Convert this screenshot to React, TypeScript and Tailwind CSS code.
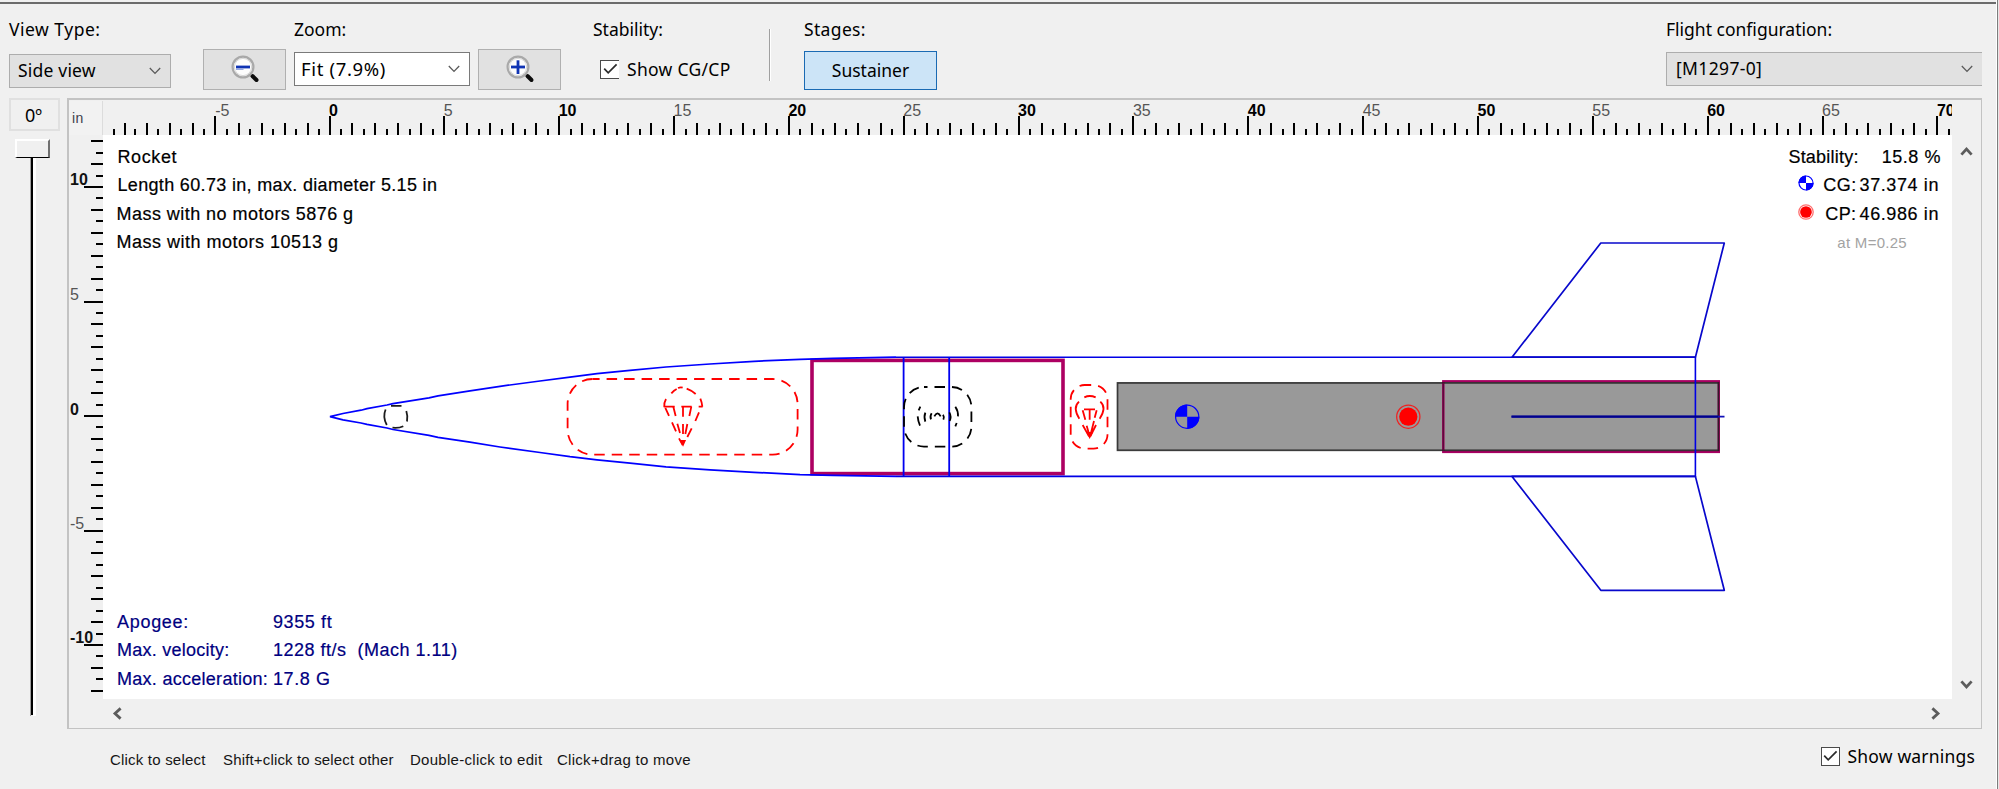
import React, { ReactNode } from "react";

/* Pixels per inch and origin of the drawing, in page pixels. */
const SCALE_X = 22.97;
const SCALE_Y = 22.9;
const ORIGIN_X = 329.5;
const ORIGIN_Y = 416;

const RULER_LEFT = 103;
const RULER_TOP = 101;
const VIEW_TOP = 135;

function Chevron({ className = "" }: { className?: string }) {
  return (
    <svg className={className} width="12" height="8" viewBox="0 0 12 8" fill="none" stroke="#5a5a5a" strokeWidth="1.3">
      <path d="M0.8 1 L6 6.4 L11.2 1" />
    </svg>
  );
}

function ScrollArrow({ d, w, h, className = "" }: { d: string; w: number; h: number; className?: string }) {
  return (
    <svg className={className} width={w} height={h} viewBox={`0 0 ${w} ${h}`} fill="none" stroke="#5c5c5c" strokeWidth="2.8">
      <path d={d} />
    </svg>
  );
}

function Magnifier({ plus = false }: { plus?: boolean }) {
  return (
    <svg width="30" height="30" viewBox="0 0 30 30" fill="none" className="ml-[27px] mt-[4px]">
      <path d="M19.5 20.5 L22 23" stroke="#8a8a8a" strokeWidth="2.5" />
      <path d="M21.5 22 L25.5 26" stroke="#0c0c0c" strokeWidth="4" strokeLinecap="round" />
      <circle cx="12" cy="13" r="10.4" fill="#f4f4f4" stroke="#a9a9a9" strokeWidth="2.2" />
      <circle cx="12" cy="13" r="8.6" fill="#fdfdfd" stroke="#d8d8d8" strokeWidth="1" />
      <path d="M5 13 H19" stroke="#1034b4" strokeWidth="2.8" />
      {plus ? <path d="M12 6.3 V20" stroke="#1034b4" strokeWidth="2.8" /> : <path d="M5 15.3 H12.5" stroke="#7d95dd" strokeWidth="1" />}
    </svg>
  );
}

function Checkbox({ openRight = false }: { openRight?: boolean }) {
  return (
    <span className={`flex h-[19px] w-[19px] items-center justify-center border border-[#4a4a4a] bg-white ${openRight ? "border-r-0" : ""}`}>
      <svg width="15" height="12" viewBox="0 0 15 12" fill="none" stroke="#2b2b2b" strokeWidth="1.7">
        <path d="M1.2 5.6 L5.2 9.8 L13.6 1.4" />
      </svg>
    </span>
  );
}

function Column({ label, labelClass = "", className = "", children }: { label: string; labelClass?: string; className?: string; children: ReactNode }) {
  return (
    <div className={`flex shrink-0 flex-col ${className}`}>
      <span className={`h-6 whitespace-pre leading-6 ${labelClass}`}>{label}</span>
      {children}
    </div>
  );
}

function tickValues(from: number, to: number) {
  const list: number[] = [];
  for (let v = from; v <= to + 0.01; v += 0.5) list.push(v);
  return list;
}

function HorizontalRuler() {
  return (
    <svg className="block" width="1849" height="34" viewBox={`${RULER_LEFT} ${RULER_TOP} 1849 34`} fontFamily="'Liberation Sans', sans-serif" fontSize="16">
      {tickValues(-9.5, 70.5).map((v) => {
        const major = v % 5 === 0;
        const unit = v % 1 === 0;
        const x = Math.round(ORIGIN_X + v * SCALE_X + (v < 0 && !major ? 1.2 : 0) + (v < -8.6 ? 1.5 : 0)) - 1;
        const top = major ? 116 : unit ? 123 : 129;
        return <rect key={v} x={x} y={top} width="2" height={VIEW_TOP - top} fill="#000" />;
      })}
      {tickValues(-5, 70)
        .filter((v) => v % 5 === 0)
        .map((v) => (
          <text key={v} x={ORIGIN_X + v * SCALE_X - 0.5 + (v < 0 ? 1 : 0)} y="116" fontWeight={v % 10 === 0 ? 700 : 400} fill={v % 10 === 0 ? "#000" : "#555"}>
            {v}
          </text>
        ))}
    </svg>
  );
}

function VerticalRuler() {
  return (
    <svg className="block" width="34" height="564" viewBox="69 135 34 564" fontFamily="'Liberation Sans', sans-serif" fontSize="16">
      {tickValues(-12, 12).map((v) => {
        const major = v % 5 === 0;
        const unit = v % 1 === 0;
        const left = major ? 84 : unit ? 91 : 96;
        return <rect key={v} x={left} y={Math.round(ORIGIN_Y - v * SCALE_Y) - 1} width={103 - left} height="2" fill="#000" />;
      })}
      {[10, 5, 0, -5, -10].map((v) => (
        <text key={v} x="70" y={ORIGIN_Y - v * SCALE_Y - (v === 0 ? 1.5 : 2)} fontWeight={v % 10 === 0 ? 700 : 400} fill={v % 10 === 0 ? "#111" : "#555"}>
          {v}
        </text>
      ))}
    </svg>
  );
}

function CgSymbol({ cx, cy, r, clear }: { cx: number; cy: number; r: number; clear: string }) {
  return (
    <g>
      <circle cx={cx} cy={cy} r={r - 0.6} fill={clear} stroke="#0000ff" strokeWidth="1.2" />
      <path d={`M${cx} ${cy} H${cx - r} A${r} ${r} 0 0 1 ${cx} ${cy - r} Z M${cx} ${cy} H${cx + r} A${r} ${r} 0 0 1 ${cx} ${cy + r} Z`} fill="#0000ff" />
    </g>
  );
}

function CpSymbol({ cx, cy, r, ring }: { cx: number; cy: number; r: number; ring: string }) {
  return (
    <g>
      <circle cx={cx} cy={cy} r={r - 0.6} fill="none" stroke={ring} strokeWidth="1.3" />
      <circle cx={cx} cy={cy} r={r * 0.75} fill="#ff0000" />
    </g>
  );
}

function RocketDrawing() {
  return (
    <svg className="block" width="1849" height="564" viewBox={`${RULER_LEFT} ${VIEW_TOP} 1849 564`} fill="none">
      {/* motor mount tube and motor */}
      <rect x="1117.5" y="382.7" width="601" height="67.6" fill="#999999" />
      <rect x="1443.3" y="381.3" width="275.5" height="70.6" stroke="#a80062" strokeWidth="2.4" />
      <rect x="1117.5" y="382.9" width="601" height="67.4" stroke="#1e1e1e" strokeOpacity="0.85" strokeWidth="1.7" />
      <path d="M1443.3 382.5 V450.5" stroke="#5e0a3c" strokeWidth="1.6" />

      {/* inner tube */}
      <rect x="812" y="360.4" width="251" height="113.2" stroke="#ad0062" strokeWidth="3.6" />

      {/* outer body and nose cone */}
      <path
        d="M896 357.2 L833 358.4 L800 359.4 L754 361.3 L710 364 L666 367 L630 370.3 L597 373.6 L570 377.2 L540 381 L500 386.3 L470 390.8 L438 395.8 L429 397.8 L393 403.7 L387 405 L367 408.7 L361 410.2 L343 413.5 L330 416.7 L343 419.9 L361 423 L367 424.4 L387 428 L393 429.5 L429 435.3 L438 437.4 L470 442.2 L500 447 L540 452.5 L570 456.7 L597 459.8 L630 463.2 L666 466.8 L710 469.8 L754 472.3 L800 474.6 L833 475.4 L896 476.4"
        stroke="#0000ff"
        strokeWidth="1.7"
      />
      <path d="M896 357.2 H1695.4 V476.4 H896" stroke="#0000e6" strokeWidth="1.6" />
      <path d="M903.6 357 V476.4 M949.2 357 V476.4" stroke="#0000f0" strokeWidth="1.8" />

      {/* fins */}
      <g stroke="#0808cc" strokeWidth="1.7" strokeLinejoin="round">
        <path d="M1512 357.2 L1600.8 243 H1724.3 L1695.4 357.2 Z" />
        <path d="M1512 476.4 L1600.8 590.3 H1724.3 L1695.4 476.4 Z" />
      </g>
      <path d="M1511.5 416.6 H1724.5" stroke="#1010b8" strokeWidth="1.8" />
      <path d="M1511.5 416.6 H1718" stroke="#00008c" strokeWidth="2.4" />

      {/* nose mass */}
      <path d="M385.6 409.5 Q382.4 417 386.8 425 M391 405.9 H401.5 M406.3 411 Q408 416 407 421.5 M392.5 427.7 Q399 428.3 403.3 426.2" stroke="#1c1c1c" strokeWidth="1.8" />

      {/* main parachute */}
      <rect x="567.6" y="379" width="230" height="75.6" rx="25" stroke="#ff0000" strokeWidth="1.8" strokeDasharray="10.5 7" strokeDashoffset="3.5" />
      <g transform="translate(650 380) scale(0.33333)" stroke="#ff0000" strokeWidth="5.4">
        <path d="M43 80 Q41 70 48 57 M64 40 Q72 31 80 27 M84 24 Q92 21 98 23 M110 26 Q126 32 137 42 M151 56 Q156 68 157 80" />
        <path d="M41 80 H74 M94 80 H125 M146 80 H158" />
        <path d="M46 84 L57 108 M66 127 L78 154 M87 175 L98 195 M70 80 L77 108 M82 131 L90 159 M99 80 V110 M99 132 V162 M124 80 L118 108 M112 132 L106 162 M147 97 L136 123 M125 145 L112 171" />
        <path d="M93 183 H104 L99 194 Z" fill="#ff0000" />
      </g>

      {/* altimeter */}
      <rect x="904" y="387" width="67.4" height="59.6" rx="20" stroke="#000" strokeWidth="1.8" strokeDasharray="10.5 7" strokeDashoffset="7" />
      <g transform="translate(895 375) scale(0.33333)" stroke="#000" strokeWidth="5.4">
        <path d="M76 95 L71 106 M68 124 Q69 138 75 152 M91 113 Q86 126 91 140 M110 115 Q104 124 108 133 M118 124 Q127 106 137 124 M144 119 Q149 126 145 134 M163 112 Q170 124 164 138 M181 95 Q190 108 189 124 M185 144 L181 154" />
      </g>

      {/* drogue parachute */}
      <rect x="1070.7" y="385" width="36.8" height="63.6" rx="14" stroke="#ff0000" strokeWidth="1.8" strokeDasharray="10.5 7" strokeDashoffset="4" />
      <g transform="translate(895 375) scale(0.33333)" stroke="#ff0000" strokeWidth="5.4">
        <path d="M568 67 Q584 59 602 67 M552 80 Q532 98 553 131 M616 80 Q636 98 614 131 M567 103 H600 M563 106 L571 134 M584 104 V134 M605 106 L599 128 M563 150 L582 184 M575 152 L583 180 M597 138 L587 178 M603 150 L586 184" />
        <path d="M578 174 H590 L584 186 Z" fill="#ff0000" />
      </g>

      <CgSymbol cx={1187.2} cy={416.7} r={12.2} clear="#999999" />
      <CpSymbol cx={1408.3} cy={416.7} r={12.2} ring="#ee2222" />
    </svg>
  );
}

function Viewport() {
  return (
    <div className="relative h-[564px] w-[1849px] bg-white text-[18px] text-black [-webkit-text-stroke:0.2px]">
      <RocketDrawing />
      <div className="absolute left-[14.5px] top-[7.5px] flex flex-col whitespace-pre leading-[28.5px] tracking-[0.46px]">
        <span className="tracking-[0.6px]">Rocket</span>
        <span className="tracking-[0.33px]">Length 60.73 in, max. diameter 5.15 in</span>
        <span className="-ml-px">Mass with no motors 5876 g</span>
        <span className="-ml-px tracking-[0.5px]">Mass with motors 10513 g</span>
      </div>
      <div className="absolute bottom-[6px] left-[14px] grid grid-cols-[156px_auto] whitespace-pre leading-[28.3px] text-[#000080]">
        <span className="tracking-[0.7px]">Apogee:</span>
        <span className="tracking-[0.6px]">9355 ft</span>
        <span className="tracking-[0.25px]">Max. velocity:</span>
        <span className="tracking-[0.5px]">1228 ft/s&nbsp; (Mach 1.11)</span>
        <span className="tracking-[0.28px]">Max. acceleration:</span>
        <span className="tracking-[0.6px]">17.8 G</span>
      </div>
      <div className="absolute right-[11px] top-[7.5px] flex flex-col items-end whitespace-pre leading-[28.5px]">
        <div className="flex gap-[23px]">
          <span className="tracking-[0.22px]">Stability:</span>
          <span className="tracking-[0.55px]">15.8 %</span>
        </div>
        <div className="flex items-center pr-[2px]">
          <svg className="mr-[9px] -mt-1" width="16" height="16" viewBox="0 0 16 16">
            <CgSymbol cx={8} cy={8} r={7.6} clear="#ffffff" />
          </svg>
          <span className="mr-[3px] tracking-[0.4px]">CG:</span>
          <span className="tracking-[0.6px]">37.374 in</span>
        </div>
        <div className="flex items-center pr-[2px]">
          <svg className="mr-[11px] -mt-1" width="16" height="16" viewBox="0 0 16 16">
            <CpSymbol cx={8} cy={8} r={7.8} ring="#ff7070" />
          </svg>
          <span className="mr-[3px] tracking-[0.4px]">CP:</span>
          <span className="tracking-[0.6px]">46.986 in</span>
        </div>
        <span className="mr-[34px] mt-px text-[15px] tracking-[0.28px] text-[#a3a3a3] [-webkit-text-stroke:0]">at M=0.25</span>
      </div>
    </div>
  );
}

export default function App() {
  return (
    <div className="flex h-[789px] w-[1999px] overflow-hidden bg-[#f0f0f0] font-['Liberation_Sans',sans-serif] text-black">
      <div className="flex w-[1996px] flex-col">
        <div className="mt-[2px] h-[2px] shrink-0 bg-[#6b6b6b]" />

        {/* toolbar */}
        <div className="flex h-[94px] shrink-0 items-start pl-[9px] pr-[14px] pt-[13px] font-['Noto_Sans',sans-serif] text-[17.5px]">
          <Column label="View Type:" labelClass="tracking-[0.5px]" className="w-[162px]">
            <div className="mt-[13px] flex h-[34px] items-center justify-between border border-[#adadad] bg-[#e1e1e1] pl-2 pr-[9px]">
              <span className="leading-none tracking-[0.2px]">Side view</span>
              <Chevron />
            </div>
          </Column>
          <div className="ml-[32px] mt-[32px] h-[41px] w-[83px] border border-[#b0b0b0] bg-[#e1e1e1]">
            <Magnifier />
          </div>
          <Column label="Zoom:" className="ml-[8px] w-[176px]">
            <div className="mt-[11px] flex h-[34px] items-center justify-between border border-[#7a7a7a] bg-white pl-[6px] pr-[9px]">
              <span className="text-[18.5px] leading-none tracking-[0.65px]">Fit (7.9%)</span>
              <Chevron />
            </div>
          </Column>
          <div className="ml-[8px] mt-[32px] h-[41px] w-[83px] border border-[#b0b0b0] bg-[#e1e1e1]">
            <Magnifier plus />
          </div>
          <Column label="Stability:" className="ml-[32px] w-[139px]">
            <div className="ml-[7px] mt-[15px] flex h-[28px] items-center gap-[8px]">
              <span className="-mt-[2px]">
                <Checkbox openRight />
              </span>
              <span className="leading-none tracking-[0.3px]">Show CG/CP</span>
            </div>
          </Column>
          <div className="ml-[37px] mt-[12px] h-[52px] w-[2px] border-l border-r border-l-[#a0a0a0] border-r-white" />
          <Column label="Stages:" labelClass="tracking-[0.35px]" className="ml-[33px] w-[133px]">
            <div className="mt-[10px] flex h-[39px] w-[133px] items-center justify-center border border-[#1a6ab3] bg-[#cce4f7]">
              <span className="leading-none">Sustainer</span>
            </div>
          </Column>
          <Column label="Flight configuration:" className="ml-auto w-[316px]">
            <div className="mt-[11px] flex h-[34px] items-center justify-between border border-r-0 border-[#adadad] bg-[#e1e1e1] pl-[9px] pr-[9px]">
              <span className="leading-none tracking-[0.35px]">[M1297-0]</span>
              <Chevron />
            </div>
          </Column>
        </div>

        {/* rotation slider and view */}
        <div className="flex h-[631px] shrink-0">
          <div className="flex w-[67px] flex-col pl-[9px]">
            <div className="flex h-[33px] w-[51px] items-center justify-center border-2 border-[#e0e0e0] pr-[2px] font-['Noto_Sans',sans-serif] text-[18px] leading-none">0º</div>
            <div className="ml-[6px] mt-[8px] h-[19px] w-[35px] border-2 border-b-[1.5px] border-b-black border-l-white border-r-[#707070] border-t-white bg-[#f0f0f0]" />
            <div className="ml-[21px] flex h-[558px] w-[6px]">
              <div className="w-px bg-[#a0a0a0]" />
              <div className="h-[557px] w-[2px] bg-black" />
              <div className="w-[3px] bg-white" />
            </div>
          </div>

          <div className="grid w-[1915px] grid-cols-[34px_1849px_28px] grid-rows-[34px_564px_29px] border-2 border-b-[1.5px] border-r-[1.5px] border-[#c3c3c3] pt-px">
            <div className="flex items-center border-r border-[#dcdcdc] bg-[#f2f2f2] pl-[3px] text-[14px] tracking-[0.3px] text-[#40404c]">in</div>
            <HorizontalRuler />
            <div />
            <VerticalRuler />
            <Viewport />
            <div className="flex flex-col items-center justify-between pb-[9px] pt-[11px]">
              <ScrollArrow w={13} h={10} d="M1.4 8.6 L6.5 3 L11.6 8.6" />
              <ScrollArrow w={13} h={10} d="M1.4 1.4 L6.5 7 L11.6 1.4" />
            </div>
            <div />
            <div className="flex items-center justify-between pl-[9px] pr-[11px]">
              <ScrollArrow w={10} h={13} d="M8.6 1.4 L3 6.5 L8.6 11.6" />
              <ScrollArrow w={10} h={13} d="M1.4 1.4 L7 6.5 L1.4 11.6" />
            </div>
          </div>
        </div>

        {/* hints */}
        <div className="flex flex-1 items-start justify-between pl-[110px] pr-[21px]">
          <div className="mt-[21px] flex whitespace-pre text-[15px] leading-[20px] text-[#151515]">
            <span className="w-[113px] tracking-[0.2px]">Click to select</span>
            <span className="w-[187px] tracking-[0.16px]">Shift+click to select other</span>
            <span className="w-[147px] tracking-[0.28px]">Double-click to edit</span>
            <span className="tracking-[0.28px]">Click+drag to move</span>
          </div>
          <div className="mt-[15px] flex items-center gap-[7px] font-['Noto_Sans',sans-serif] text-[17.5px]">
            <Checkbox />
            <span className="leading-6 tracking-[0.19px]">Show warnings</span>
          </div>
        </div>
      </div>
      <div className="w-[3px] border-l border-r border-l-white border-r-[#e8e8e8] bg-[#7d7d7d]" />
    </div>
  );
}
